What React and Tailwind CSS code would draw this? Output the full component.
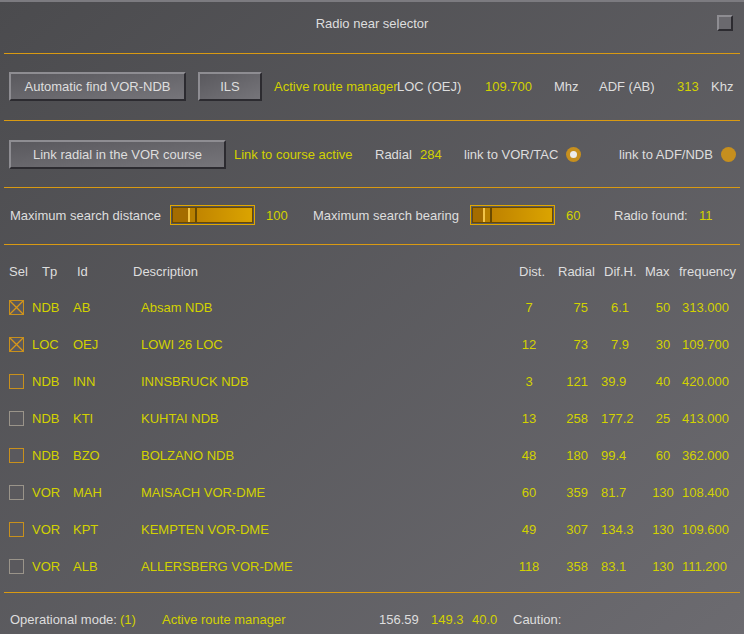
import React from "react"

const WHITE = "text-[#dedede]"
const YELLOW = "text-[#d2d200]"

const rows = [
  { sel: true, tp: "NDB", id: "AB", desc: "Absam NDB", dist: "7", rad: "75", dif: "6.1", max: "50", freq: "313.000", hl: true },
  { sel: true, tp: "LOC", id: "OEJ", desc: "LOWI 26 LOC", dist: "12", rad: "73", dif: "7.9", max: "30", freq: "109.700", hl: true },
  { sel: false, tp: "NDB", id: "INN", desc: "INNSBRUCK NDB", dist: "3", rad: "121", dif: "39.9", max: "40", freq: "420.000", hl: true },
  { sel: false, tp: "NDB", id: "KTI", desc: "KUHTAI NDB", dist: "13", rad: "258", dif: "177.2", max: "25", freq: "413.000", hl: false },
  { sel: false, tp: "NDB", id: "BZO", desc: "BOLZANO NDB", dist: "48", rad: "180", dif: "99.4", max: "60", freq: "362.000", hl: true },
  { sel: false, tp: "VOR", id: "MAH", desc: "MAISACH VOR-DME", dist: "60", rad: "359", dif: "81.7", max: "130", freq: "108.400", hl: false },
  { sel: false, tp: "VOR", id: "KPT", desc: "KEMPTEN VOR-DME", dist: "49", rad: "307", dif: "134.3", max: "130", freq: "109.600", hl: true },
  { sel: false, tp: "VOR", id: "ALB", desc: "ALLERSBERG VOR-DME", dist: "118", rad: "358", dif: "83.1", max: "130", freq: "111.200", hl: false },
]

const Line = () => <div className="mx-[4px] h-px bg-[#d99a12]" />

const Button = ({ children, className }) => (
  <button
    className={`h-[29px] shrink-0 whitespace-nowrap border-2 border-t-[#8e8d92] border-l-[#8e8d92] border-b-[#2c2b30] border-r-[#2c2b30] bg-gradient-to-br from-[#5a595e] to-[#76757a] text-[13px] ${WHITE} ${className}`}
  >
    {children}
  </button>
)

const Slider = ({ pos }) => (
  <div className="w-[85px] h-[20px] shrink-0 border border-[#e0a800] p-px">
    <div className="flex h-full w-full border border-[#6a4a00] bg-gradient-to-r from-[#b67800] to-[#dba400]">
      <div className={`${pos} h-full bg-[#a46c00]`} />
      <div className="h-full w-[9px] border-l-2 border-[#f2c44a] border-r-2 border-r-[#6a4a00] bg-[#b88000]" />
    </div>
  </div>
)

const Radio = ({ on }) => (
  <div className="w-[15px] h-[15px] shrink-0 rounded-full bg-[#c68f1e] flex items-center justify-center">
    {on && <div className="w-[7px] h-[7px] rounded-full bg-[#ececec]" />}
  </div>
)

const Check = ({ on, hl }) => (
  <div
    className={`w-[15px] h-[15px] border ${hl ? "border-[#c8901c]" : "border-[#9a948a]"} bg-[#5a595d]`}
  >
    {on && (
      <svg viewBox="0 0 13 13" className="w-full h-full">
        <path d="M0 0L13 13M13 0L0 13" stroke="#d8961a" strokeWidth="1.3" />
      </svg>
    )}
  </div>
)

export default function App() {
  return (
    <div
      className="w-[744px] h-[634px] overflow-hidden whitespace-nowrap bg-gradient-to-br from-[#4b4b4e] to-[#6c6b70] text-[13px] leading-none"
      style={{ fontFamily: '"Liberation Sans", Arial, sans-serif' }}
    >
      <div className="h-[2px] bg-[#7c7b80]" />
      {/* title */}
      <div className="relative h-[51px] flex items-start justify-center pt-[15px]">
        <span className={WHITE}>Radio near selector</span>
        <div className="absolute right-[11px] top-[13px] w-[16px] h-[16px] border-2 border-t-[#8e8d92] border-l-[#8e8d92] border-b-[#2c2b30] border-r-[#2c2b30] bg-[#6a696e]" />
      </div>
      <Line />

      {/* automatic find */}
      <div className="h-[66px] flex items-center pl-[9px] pb-[1px]">
        <Button className="w-[177px]">Automatic find VOR-NDB</Button>
        <Button className="w-[64px] ml-[12px]">ILS</Button>
        <span className={`${YELLOW} ml-[12px] w-[123px] shrink-0`}>Active route manager</span>
        <span className={`${WHITE} w-[88px] shrink-0`}>LOC (OEJ)</span>
        <span className={`${YELLOW} w-[69px] shrink-0`}>109.700</span>
        <span className={`${WHITE} w-[45px] shrink-0`}>Mhz</span>
        <span className={`${WHITE} w-[78px] shrink-0`}>ADF (AB)</span>
        <span className={`${YELLOW} w-[34px] shrink-0`}>313</span>
        <span className={WHITE}>Khz</span>
      </div>
      <Line />

      {/* link radial */}
      <div className="h-[66px] flex items-center pl-[9px]">
        <Button className="w-[217px]">Link radial in the VOR course</Button>
        <span className={`${YELLOW} ml-[8px] w-[141px] shrink-0`}>Link to course active</span>
        <span className={`${WHITE} w-[45px] shrink-0`}>Radial</span>
        <span className={`${YELLOW} w-[44px] shrink-0`}>284</span>
        <span className={`${WHITE} w-[102px] shrink-0`}>link to VOR/TAC</span>
        <Radio on />
        <span className={`${WHITE} ml-[38px] w-[102px] shrink-0`}>link to ADF/NDB</span>
        <Radio />
      </div>
      <Line />

      {/* search */}
      <div className="h-[56px] flex items-center pl-[10px] pb-[2px]">
        <span className={`${WHITE} w-[160px] shrink-0`}>Maximum search distance</span>
        <Slider pos="w-[15px]" />
        <span className={`${YELLOW} ml-[11px] w-[47px] shrink-0`}>100</span>
        <span className={`${WHITE} w-[157px] shrink-0`}>Maximum search bearing</span>
        <Slider pos="w-[10px]" />
        <span className={`${YELLOW} ml-[11px] w-[48px] shrink-0`}>60</span>
        <span className={`${WHITE} w-[85px] shrink-0`}>Radio found:</span>
        <span className={YELLOW}>11</span>
      </div>
      <Line />

      {/* table */}
      <div className="h-[347px] pt-[20px]">
        <div className={`flex items-center h-[12px] pl-[9px] ${WHITE}`}>
          <span className="w-[33px] shrink-0">Sel</span>
          <span className="w-[35px] shrink-0">Tp</span>
          <span className="w-[56px] shrink-0">Id</span>
          <span className="w-[386px] shrink-0">Description</span>
          <span className="w-[39px] shrink-0">Dist.</span>
          <span className="w-[46px] shrink-0">Radial</span>
          <span className="w-[41px] shrink-0">Dif.H.</span>
          <span className="w-[34px] shrink-0">Max</span>
          <span>frequency</span>
        </div>
        <div className="pt-[12px]">
          {rows.map((r) => (
            <div key={r.id} className={`flex items-center h-[37px] pl-[9px] ${YELLOW}`}>
              <div className="w-[23px] shrink-0">
                <Check on={r.sel} hl={r.hl} />
              </div>
              <span className="w-[41px] shrink-0">{r.tp}</span>
              <span className="w-[68px] shrink-0">{r.id}</span>
              <span className="w-[370px] shrink-0">{r.desc}</span>
              <span className="w-[36px] shrink-0 text-center">{r.dist}</span>
              <span className="w-[41px] shrink-0 text-right">{r.rad}</span>
              <span className={`w-[56px] shrink-0 ${r.dif.length === 3 ? "pl-[23px]" : "pl-[13px]"}`}>{r.dif}</span>
              <span className="w-[38px] shrink-0 text-center">{r.max}</span>
              <span>{r.freq}</span>
            </div>
          ))}
        </div>
      </div>
      <Line />

      {/* footer */}
      <div className="flex items-center pl-[10px] pt-[20px]">
        <span className={`${WHITE} w-[110px] shrink-0`}>Operational mode:</span>
        <span className={`${YELLOW} w-[42px] shrink-0`}>(1)</span>
        <span className={`${YELLOW} w-[217px] shrink-0`}>Active route manager</span>
        <span className={`${WHITE} w-[52px] shrink-0`}>156.59</span>
        <span className={`${YELLOW} w-[41px] shrink-0`}>149.3</span>
        <span className={`${YELLOW} w-[41px] shrink-0`}>40.0</span>
        <span className={WHITE}>Caution:</span>
      </div>
    </div>
  )
}
